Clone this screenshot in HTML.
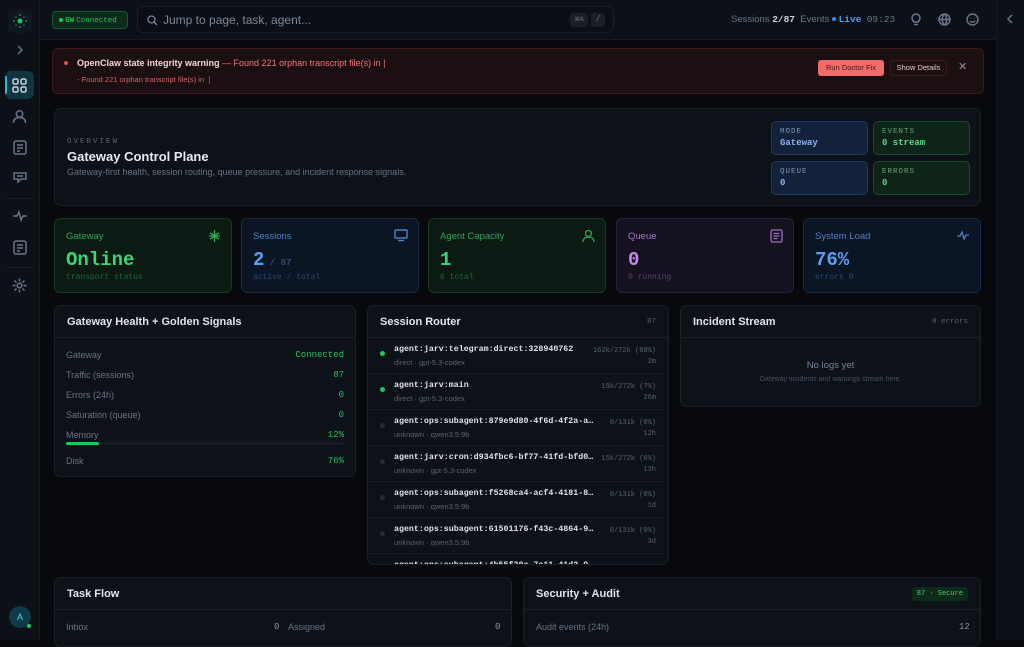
<!DOCTYPE html>
<html><head><meta charset="utf-8">
<style>
*{box-sizing:border-box;margin:0;padding:0}
body{width:1024px;height:640px;overflow:hidden;background:#07090c;font-family:"Liberation Sans",sans-serif;color:#d4d8de;position:relative}
.a{position:absolute}
.mono{font-family:"Liberation Mono",monospace}
.side{left:0;top:0;width:40px;height:640px;background:#0c1017;border-right:1px solid #161b24}
.rail{left:996px;top:0;width:28px;height:640px;background:#0c1017;border-left:1px solid #161b24}
.top{left:40px;top:0;width:956px;height:40px;background:#0c1017;border-bottom:1px solid #161b24}
.card{background:#0d1118;border:1px solid #1a202a;border-radius:7px}
.ico{stroke:#6b7589;fill:none;stroke-width:1.5}
.stat{border-radius:6px;top:218px;width:178px;height:75px}
.stat .t{position:absolute;left:11px;top:12px;font-size:9.5px}
.stat .v{position:absolute;left:11px;top:30px;font-size:19px;font-weight:bold;font-family:"Liberation Mono",monospace}
.stat .s{position:absolute;left:11px;top:54px;font-size:8px;font-family:"Liberation Mono",monospace}
.stat svg{position:absolute;right:10px;top:10px}
.ph{height:32px;border-bottom:1px solid #1a202a;padding:0 12px;display:flex;align-items:center;justify-content:space-between;font-size:11px;font-weight:bold;color:#e2e5ea}
.row{display:flex;justify-content:space-between;font-size:9px;color:#6b7385;padding:0 11px;height:20px;align-items:center}
.row b{font-weight:normal;font-family:"Liberation Mono",monospace;color:#22c55e}
.sr{height:36px;border-bottom:1px solid #161b24;position:relative}
.sr .d{position:absolute;left:12px;top:13px;width:5px;height:5px;border-radius:50%;background:#262c36}
.sr .n{position:absolute;left:26px;top:7px;font-family:"Liberation Mono",monospace;font-size:8.3px;font-weight:bold;color:#dfe3e8;width:200px;white-space:nowrap;overflow:hidden;text-overflow:ellipsis}
.sr .m{position:absolute;left:26px;top:20px;font-size:7.5px;color:#5a6373}
.sr .r{position:absolute;right:12px;top:8px;font-family:"Liberation Mono",monospace;font-size:7px;color:#5a6373;text-align:right;line-height:11px}
.mini{border-radius:5px;width:97px;height:34px;padding:6px 8px}
.mini .k{font-size:7.5px;letter-spacing:1px;font-family:"Liberation Mono",monospace}
.mini .v{font-size:9px;font-family:"Liberation Mono",monospace;font-weight:bold;margin-top:2px}
</style></head><body>
<div class="a side">
  <div class="a" style="left:8px;top:9px;width:24px;height:24px;border-radius:5px;background:#111720">
   <svg width="24" height="24"><circle cx="12" cy="12" r="2.5" fill="#22c55e"/><g fill="#22c55e" opacity=".7"><circle cx="12" cy="6" r="1"/><circle cx="12" cy="18" r="1"/><circle cx="6" cy="12" r="1"/><circle cx="18" cy="12" r="1"/><circle cx="8" cy="8" r=".8"/><circle cx="16" cy="8" r=".8"/><circle cx="8" cy="16" r=".8"/><circle cx="16" cy="16" r=".8"/></g></svg>
  </div>
  <svg class="a" style="left:14px;top:44px" width="12" height="12"><path d="M4 2l4 4-4 4" class="ico"/></svg>
  <div class="a" style="left:5px;top:71px;width:29px;height:28px;border-radius:6px;background:#123340"></div>
  <div class="a" style="left:5px;top:76px;width:2px;height:18px;background:#2fb8d8;border-radius:1px"></div>
  <svg class="a" style="left:12px;top:78px" width="15" height="15"><g stroke="#c8d3dc" fill="none" stroke-width="1.5"><rect x="1" y="1" width="5" height="5" rx="1.5"/><rect x="9" y="1" width="5" height="5" rx="1.5"/><rect x="1" y="9" width="5" height="5" rx="1.5"/><rect x="9" y="9" width="5" height="5" rx="1.5"/></g></svg>
  <svg class="a" style="left:12px;top:109px" width="15" height="15"><circle cx="7.5" cy="5" r="3.2" class="ico"/><path d="M1.5 14c0-4 2.5-5.5 6-5.5s6 1.5 6 5.5" class="ico"/></svg>
  <svg class="a" style="left:13px;top:140px" width="14" height="15"><rect x="1" y="1" width="12" height="13" rx="2" class="ico"/><path d="M4 5h6M4 8h6M4 11h3" class="ico"/></svg>
  <svg class="a" style="left:13px;top:171px" width="14" height="14"><path d="M1 2h12v6H8l-3 3V8H1z" class="ico"/><path d="M4 5h6" class="ico"/></svg>
  <div class="a" style="left:6px;top:198px;width:28px;height:1px;background:#1a202a"></div>
  <svg class="a" style="left:12px;top:209px" width="16" height="14"><path d="M1 7h4l2-4 2 8 2-4h4" class="ico"/></svg>
  <svg class="a" style="left:13px;top:240px" width="14" height="15"><rect x="1" y="1" width="12" height="13" rx="2" class="ico"/><path d="M4 5h6M4 8h6M4 11h3" class="ico"/></svg>
  <div class="a" style="left:6px;top:267px;width:28px;height:1px;background:#1a202a"></div>
  <svg class="a" style="left:12px;top:278px" width="15" height="15"><circle cx="7.5" cy="7.5" r="2.3" class="ico"/><path d="M7.5 0.5v3M7.5 11.5v3M0.5 7.5h3M11.5 7.5h3M2.5 2.5l2 2M10.5 10.5l2 2M2.5 12.5l2-2M10.5 4.5l2-2" class="ico"/></svg>
  <div class="a" style="left:9px;top:606px;width:22px;height:22px;border-radius:50%;background:#0e3b47;color:#4fd1e6;font-size:9px;text-align:center;line-height:22px">A</div>
  <div class="a" style="left:27px;top:624px;width:4px;height:4px;border-radius:50%;background:#22c55e"></div>
</div>
<div class="a top">
  <div class="a" style="left:12px;top:11px;width:76px;height:18px;border-radius:4px;background:#0d2a1a;border:1px solid #16552f;font-size:7.5px;color:#22c55e;line-height:16px;padding-left:6px" ><span style="display:inline-block;width:4px;height:4px;border-radius:50%;background:#22c55e;vertical-align:middle"></span> <b class="mono">GW</b> <span class="mono">Connected</span></div>
  <div class="a" style="left:97px;top:6px;width:477px;height:27px;border:1px solid #1a202a;border-radius:6px;background:#0b0f15">
    <svg class="a" style="left:9px;top:8px" width="11" height="11"><circle cx="4.5" cy="4.5" r="3.5" stroke="#7a8497" fill="none" stroke-width="1.3"/><path d="M7 7l3 3" stroke="#7a8497" stroke-width="1.3"/></svg>
    <div class="a" style="left:25px;top:6px;font-size:12px;color:#7c8597">Jump to page, task, agent...</div>
    <div class="a mono" style="left:432px;top:6px;width:18px;height:14px;border-radius:3px;background:#1a1f28;color:#697284;font-size:6px;text-align:center;line-height:14px">⌘K</div>
    <div class="a mono" style="left:453px;top:6px;width:14px;height:14px;border-radius:3px;background:#1a1f28;color:#697284;font-size:8px;text-align:center;line-height:14px">/</div>
  </div>
  <div class="a" style="left:691px;top:14px;font-size:9.5px;color:#6b7487;white-space:nowrap">Sessions <b class="mono" style="color:#d0d5dc">2/87</b> &nbsp;Events <span style="display:inline-block;width:4px;height:4px;border-radius:50%;background:#3b82f6;vertical-align:middle"></span> <b class="mono" style="color:#4aa3f0">Live</b> &nbsp;<span class="mono" style="color:#6b7487">09:23</span></div>
  <svg class="a" style="left:870px;top:13px" width="12" height="13"><path d="M6 1a4 4 0 0 1 4 4c0 2-1 3-2 4H4C3 8 2 7 2 5a4 4 0 0 1 4-4zM4 11.5h4" class="ico"/></svg>
  <svg class="a" style="left:898px;top:13px" width="13" height="13"><circle cx="6.5" cy="6.5" r="5.5" class="ico"/><path d="M1 6.5h11M6.5 1c-3 3-3 8 0 11M6.5 1c3 3 3 8 0 11" class="ico"/></svg>
  <svg class="a" style="left:926px;top:13px" width="13" height="13"><circle cx="6.5" cy="6.5" r="5.5" class="ico"/><path d="M4 8c1.5 1.5 3.5 1.5 5 0" class="ico"/><circle cx="4.6" cy="5" r=".5" fill="#6b7589"/><circle cx="8.4" cy="5" r=".5" fill="#6b7589"/></svg>
</div>
<div class="a rail"><svg class="a" style="left:8px;top:13px" width="10" height="12"><path d="M7 2L3 6l4 4" class="ico"/></svg></div>

<div class="a" style="left:52px;top:48px;width:932px;height:46px;border-radius:6px;background:#1c0f12;border:1px solid #3d1a1d">
  <div class="a" style="left:11px;top:12px;width:4px;height:4px;border-radius:50%;background:#ef4444"></div>
  <div class="a" style="left:24px;top:9px;font-size:9px;color:#f07a7a;white-space:nowrap"><b style="color:#f3d6d6">OpenClaw state integrity warning</b> — Found 221 orphan transcript file(s) in <span style="color:#f07a7a">|</span></div>
  <div class="a" style="left:24px;top:26px;font-size:7.5px;color:#d06767">- Found 221 orphan transcript file(s) in &nbsp;|</div>
  <div class="a" style="left:765px;top:11px;width:66px;height:16px;border-radius:3px;background:#f26b6b;color:#4a1010;font-size:7.5px;text-align:center;line-height:16px">Run Doctor Fix</div>
  <div class="a" style="left:837px;top:11px;width:57px;height:16px;border-radius:3px;border:1px solid #3d1a1d;color:#e8c8c8;font-size:7.5px;text-align:center;line-height:14px">Show Details</div>
  <div class="a" style="left:905px;top:11px;color:#9a8a8c;font-size:11px">✕</div>
</div>

<div class="a card" style="left:54px;top:108px;width:927px;height:98px">
  <div class="a mono" style="left:12px;top:29px;font-size:7.5px;letter-spacing:2px;color:#5f6879">OVERVIEW</div>
  <div class="a" style="left:12px;top:40px;font-size:13px;font-weight:bold;color:#e6e9ee">Gateway Control Plane</div>
  <div class="a" style="left:12px;top:58px;font-size:9px;color:#697183">Gateway-first health, session routing, queue pressure, and incident response signals.</div>
  <div class="a mini" style="left:716px;top:12px;background:#13223a;border:1px solid #1f3a62"><div class="k" style="color:#7d95bd">MODE</div><div class="v" style="color:#8ab4f0">Gateway</div></div>
  <div class="a mini" style="left:818px;top:12px;background:#0f2418;border:1px solid #1b4a2d"><div class="k" style="color:#5fa676">EVENTS</div><div class="v" style="color:#5fd68a">0 stream</div></div>
  <div class="a mini" style="left:716px;top:52px;background:#13223a;border:1px solid #1f3a62"><div class="k" style="color:#7d95bd">QUEUE</div><div class="v" style="color:#8ab4f0">0</div></div>
  <div class="a mini" style="left:818px;top:52px;background:#0f2418;border:1px solid #1b4a2d"><div class="k" style="color:#5fa676">ERRORS</div><div class="v" style="color:#5fd68a">0</div></div>
</div>

<div class="a stat" style="left:54px;background:#0b1a12;border:1px solid #15391f">
  <div class="t" style="color:#2fa85a">Gateway</div><div class="v" style="color:#3fd574">Online</div><div class="s" style="color:#1f6a3a">transport status</div>
  <svg width="13" height="14"><path d="M6.5 1v12M2 4l4.5 2.5L11 4M2 10l4.5-2.5L11 10M1 7h11" stroke="#2fa85a" fill="none" stroke-width="1.3"/></svg>
</div>
<div class="a stat" style="left:241px;background:#0c1524;border:1px solid #172a45">
  <div class="t" style="color:#4f82c6">Sessions</div><div class="v" style="color:#5aa0f2">2<span style="font-size:9px;color:#3d5f8c;font-weight:normal"> / 87</span></div><div class="s" style="color:#2d4a70">active / total</div>
  <svg width="14" height="13"><rect x="1" y="1" width="12" height="8" rx="1" stroke="#4f82c6" fill="none" stroke-width="1.4"/><path d="M4 11.5h6" stroke="#4f82c6" stroke-width="1.4"/></svg>
</div>
<div class="a stat" style="left:428px;background:#0b1a12;border:1px solid #15391f">
  <div class="t" style="color:#2fa85a">Agent Capacity</div><div class="v" style="color:#3fd574">1</div><div class="s" style="color:#1f6a3a">6 total</div>
  <svg width="13" height="14"><circle cx="6.5" cy="4.5" r="3" stroke="#2fa85a" fill="none" stroke-width="1.3"/><path d="M1 13c0-3.5 2.5-5 5.5-5s5.5 1.5 5.5 5" stroke="#2fa85a" fill="none" stroke-width="1.3"/></svg>
</div>
<div class="a stat" style="left:616px;background:#16111f;border:1px solid #2e1f40">
  <div class="t" style="color:#a077c8">Queue</div><div class="v" style="color:#c488f0">0</div><div class="s" style="color:#5a4472">0 running</div>
  <svg width="13" height="14"><rect x="1" y="1" width="11" height="12" rx="1.5" stroke="#9d6fc8" fill="none" stroke-width="1.3"/><path d="M3.5 4.5h6M3.5 7h6M3.5 9.5h4" stroke="#9d6fc8" stroke-width="1.2"/></svg>
</div>
<div class="a stat" style="left:803px;background:#0c1524;border:1px solid #172a45">
  <div class="t" style="color:#4f82c6">System Load</div><div class="v" style="color:#5aa0f2">76%</div><div class="s" style="color:#2d4a70">errors 0</div>
  <svg width="14" height="13"><path d="M1 7h3l2-4 2 7 2-4h3" stroke="#4f82c6" fill="none" stroke-width="1.3"/></svg>
</div>

<div class="a card" style="left:54px;top:305px;width:302px;height:172px">
  <div class="ph">Gateway Health + Golden Signals</div>
  <div style="height:39px;padding-top:7px">
  <div class="row">Gateway<b>Connected</b></div>
  <div class="row">Traffic (sessions)<b>87</b></div>
  <div class="row">Errors (24h)<b>0</b></div>
  <div class="row">Saturation (queue)<b>0</b></div>
  <div class="row">Memory<b>12%</b></div>
  <div style="margin:-3px 11px 6px;height:3px;background:#161b24;border-radius:2px"><div style="width:12%;height:3px;background:#22c55e;border-radius:2px"></div></div>
  <div class="row">Disk<b>76%</b></div>
  </div>
</div>

<div class="a card" style="left:367px;top:305px;width:302px;height:260px;overflow:hidden">
  <div class="ph">Session Router<span class="mono" style="font-size:7.5px;color:#5a6373;font-weight:normal">87</span></div>
  <div class="sr"><div class="d" style="background:#22c55e"></div><div class="n">agent:jarv:telegram:direct:328940762</div><div class="m">direct · gpt-5.3-codex</div><div class="r">162k/272k (60%)<br>2m</div></div>
  <div class="sr"><div class="d" style="background:#22c55e"></div><div class="n">agent:jarv:main</div><div class="m">direct · gpt-5.3-codex</div><div class="r">19k/272k (7%)<br>26m</div></div>
  <div class="sr"><div class="d"></div><div class="n">agent:ops:subagent:879e9d80-4f6d-4f2a-a6…</div><div class="m">unknown · qwen3.5:9b</div><div class="r">0/131k (0%)<br>12h</div></div>
  <div class="sr"><div class="d"></div><div class="n">agent:jarv:cron:d934fbc6-bf77-41fd-bfd0…</div><div class="m">unknown · gpt-5.3-codex</div><div class="r">15k/272k (6%)<br>13h</div></div>
  <div class="sr"><div class="d"></div><div class="n">agent:ops:subagent:f5268ca4-acf4-4181-8e…</div><div class="m">unknown · qwen3.5:9b</div><div class="r">0/131k (0%)<br>1d</div></div>
  <div class="sr"><div class="d"></div><div class="n">agent:ops:subagent:61501176-f43c-4864-99…</div><div class="m">unknown · qwen3.5:9b</div><div class="r">0/131k (0%)<br>3d</div></div>
  <div class="sr"><div class="d"></div><div class="n">agent:ops:subagent:4b55f20c-7a11-41d2-9c…</div></div>
</div>

<div class="a card" style="left:680px;top:305px;width:301px;height:102px">
  <div class="ph">Incident Stream<span class="mono" style="font-size:7.5px;color:#5a6373;font-weight:normal">0 errors</span></div>
  <div style="text-align:center;font-size:9.5px;color:#7a8395;margin-top:22px">No logs yet</div>
  <div style="text-align:center;font-size:7px;color:#4a5262;margin-top:5px">Gateway incidents and warnings stream here.</div>
</div>

<div class="a card" style="left:54px;top:577px;width:458px;height:70px">
  <div class="ph" style="height:32px">Task Flow</div>
  <div class="a" style="left:11px;top:44px;font-size:9px;color:#6b7385">Inbox</div>
  <div class="a mono" style="left:219px;top:44px;font-size:9px;color:#8a93a3">0</div>
  <div class="a" style="left:233px;top:44px;font-size:9px;color:#6b7385">Assigned</div>
  <div class="a mono" style="left:440px;top:44px;font-size:9px;color:#8a93a3">0</div>
</div>
<div class="a card" style="left:523px;top:577px;width:458px;height:70px">
  <div class="ph" style="height:32px">Security + Audit<span class="mono" style="font-size:7px;color:#3fd574;font-weight:normal;background:#0d2a1a;padding:3px 5px;border-radius:3px">87 · Secure</span></div>
  <div class="a" style="left:12px;top:44px;font-size:9px;color:#6b7385">Audit events (24h)</div>
  <div class="a mono" style="left:435px;top:44px;font-size:9px;color:#8a93a3">12</div>
</div>
</body></html>
